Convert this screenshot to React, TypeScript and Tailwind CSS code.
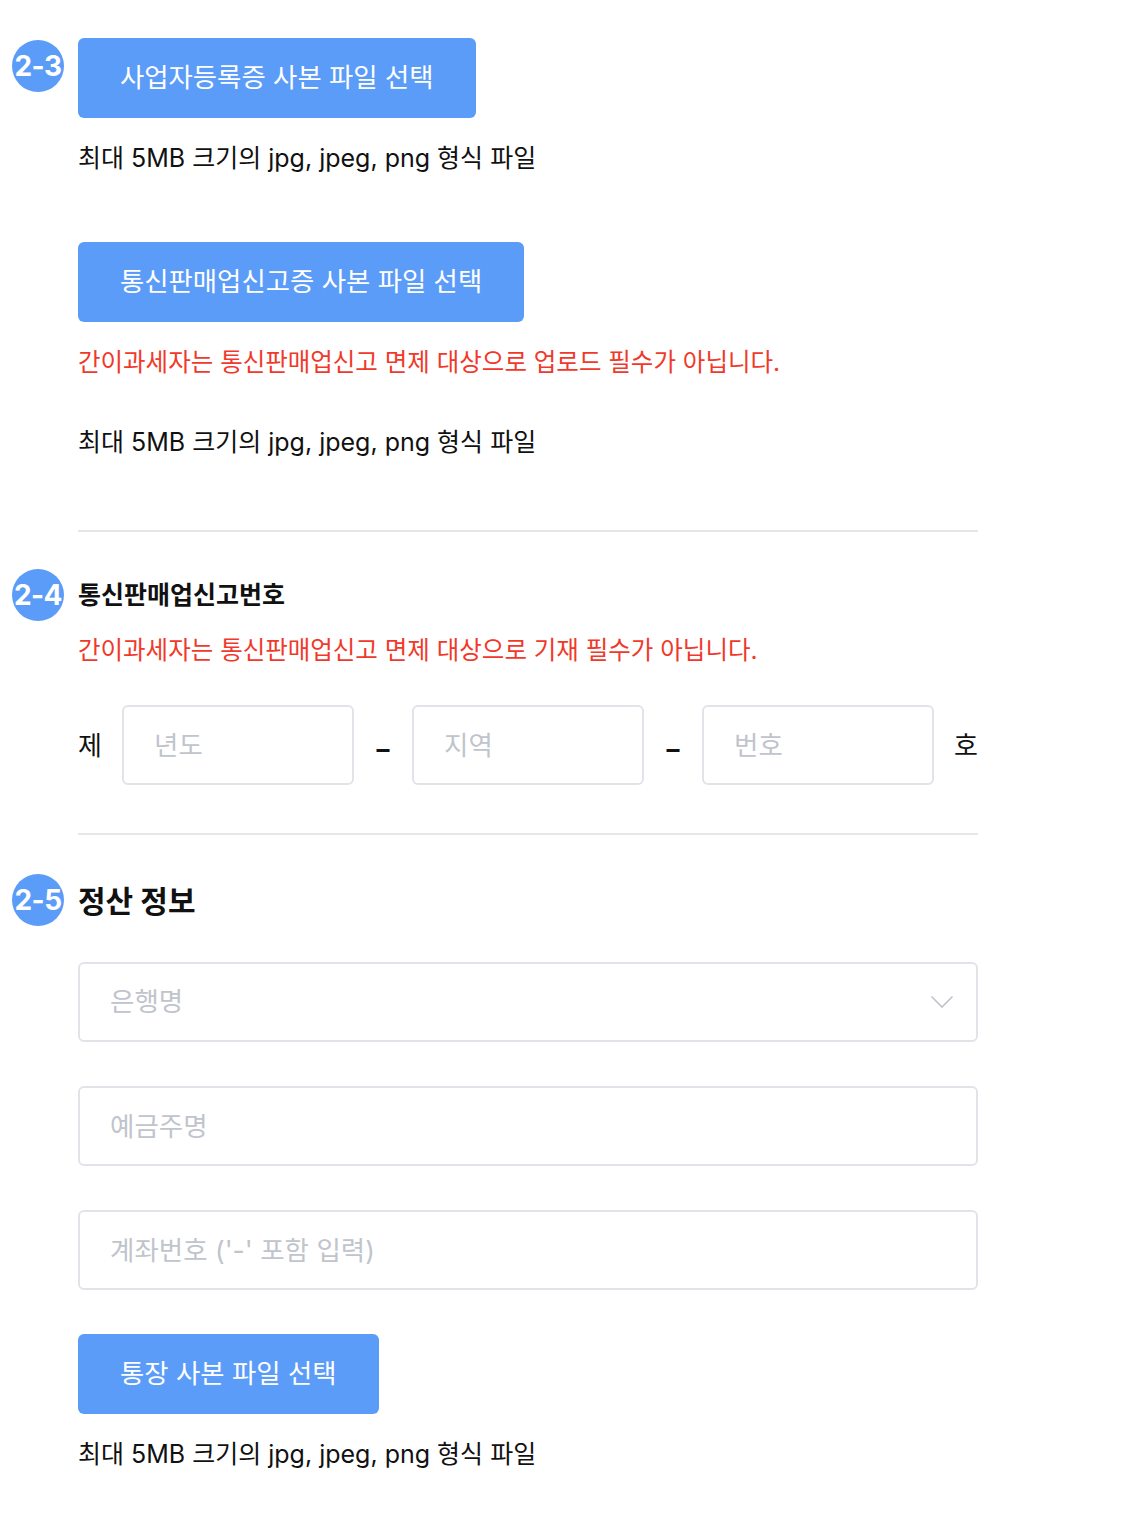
import React from 'react'

const font = { fontFamily: 'Inter, "Noto Sans CJK KR", sans-serif' }

function Badge({ label, className }: { label: string; className: string }) {
  return (
    <div
      className={`absolute -left-[66px] w-[52px] h-[52px] rounded-full bg-[#5b9cf8] flex items-center justify-center text-white text-[28px] font-bold whitespace-nowrap tracking-[-0.02em] ${className}`}
    >
      {label}
    </div>
  )
}

function FileButton({ label }: { label: string }) {
  return (
    <button className="h-[80px] px-[42px] rounded-[6px] bg-[#5b9cf8] text-white text-[26.4px] self-start">
      {label}
    </button>
  )
}

function Hint() {
  return <p className="text-[25px] leading-[34px] text-[#111]">최대 5MB 크기의 jpg, jpeg, png 형식 파일</p>
}

function Warn({ children, className = '' }: { children: React.ReactNode; className?: string }) {
  return <p className={`text-[24.5px] leading-[34px] text-[#f0392b] ${className}`}>{children}</p>
}

function Field({ placeholder, className = '' }: { placeholder: string; className?: string }) {
  return (
    <input
      placeholder={placeholder}
      className={`h-[80px] border-2 border-[#e1e3e8] rounded-[6px] px-[30px] text-[26.5px] text-[#111] placeholder:text-[#c0c4cc] outline-none bg-white ${className}`}
      style={font}
    />
  )
}

export default function App() {
  return (
    <div className="bg-white min-h-[1534px] pl-[78px] pt-[38px]" style={font}>
      <div className="w-[900px] flex flex-col">
        {/* 2-3 */}
        <div className="relative flex flex-col">
          <Badge label="2-3" className="top-[2px]" />
          <FileButton label="사업자등록증 사본 파일 선택" />
          <div className="mt-[23px]">
            <Hint />
          </div>
          <div className="mt-[67px] flex flex-col">
            <FileButton label="통신판매업신고증 사본 파일 선택" />
          </div>
          <Warn className="mt-[23px]">간이과세자는 통신판매업신고 면제 대상으로 업로드 필수가 아닙니다.</Warn>
          <div className="mt-[46px]">
            <Hint />
          </div>
        </div>

        <div className="mt-[71px] h-[2px] bg-[#e5e6ea]" />

        {/* 2-4 */}
        <div className="relative flex flex-col mt-[46px]">
          <Badge label="2-4" className="-top-[9px]" />
          <h3 className="text-[25px] leading-[34px] font-bold text-[#111]">통신판매업신고번호</h3>
          <Warn className="mt-[21px]">간이과세자는 통신판매업신고 면제 대상으로 기재 필수가 아닙니다.</Warn>
          <div className="mt-[38px] flex items-center text-[26px] text-[#111]">
            <span className="w-[24px]">제</span>
            <Field placeholder="년도" className="ml-[20px] w-[232px]" />
            <span className="w-[14px] mx-[22px] mt-[6px] text-center font-bold">–</span>
            <Field placeholder="지역" className="w-[232px]" />
            <span className="w-[14px] mx-[22px] mt-[6px] text-center font-bold">–</span>
            <Field placeholder="번호" className="w-[232px]" />
            <span className="ml-[20px] w-[24px]">호</span>
          </div>
        </div>

        <div className="mt-[48px] h-[2px] bg-[#e5e6ea]" />

        {/* 2-5 */}
        <div className="relative flex flex-col mt-[46px]">
          <Badge label="2-5" className="-top-[7px]" />
          <h3 className="text-[30px] leading-[40px] font-bold text-[#111]">정산 정보</h3>
          <div className="mt-[41px] h-[80px] border-2 border-[#e1e3e8] rounded-[6px] pl-[30px] pr-[22px] flex items-center justify-between">
            <span className="text-[26.5px] text-[#c0c4cc]">은행명</span>
            <svg width="24" height="14" viewBox="0 0 24 14" fill="none">
              <path d="M1.5 1.5 L12 12 L22.5 1.5" stroke="#c0c4cc" strokeWidth="1.6" />
            </svg>
          </div>
          <Field placeholder="예금주명" className="mt-[44px] w-full" />
          <Field placeholder="계좌번호 ('-' 포함 입력)" className="mt-[44px] w-full" />
          <div className="mt-[44px] flex flex-col">
            <FileButton label="통장 사본 파일 선택" />
          </div>
          <div className="mt-[23px]">
            <Hint />
          </div>
        </div>
      </div>
    </div>
  )
}
